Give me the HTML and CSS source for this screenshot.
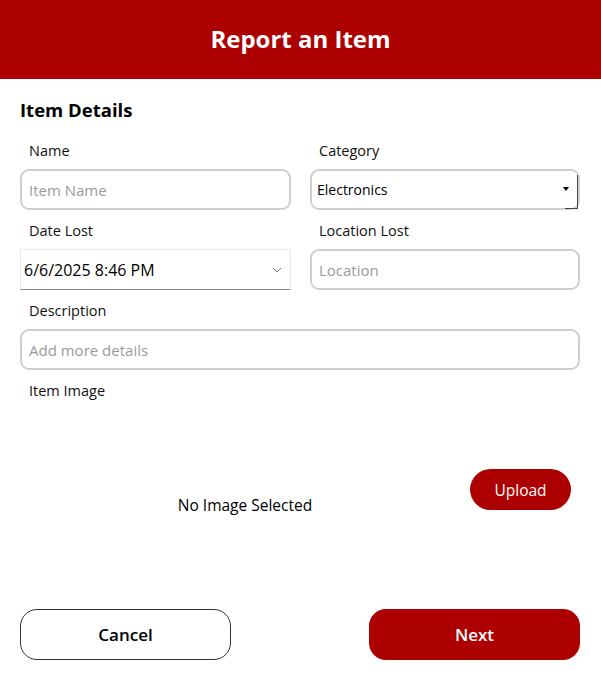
FILE: index.html
```html
<!DOCTYPE html>
<html lang="en">
<head>
<meta charset="utf-8">
<title>Report an Item</title>
<link rel="stylesheet" href="styles.css">
</head>
<body>
<header class="topbar">
  <h1 class="title">Report an Item</h1>
</header>
<main class="content">
  <h2 class="section-title">Item Details</h2>
  <div class="grid">
    <div class="field">
      <label class="label">Name</label>
      <div class="input placeholder">Item Name</div>
    </div>
    <div class="field">
      <label class="label">Category</label>
      <div class="input select">
        <span class="select-text">Electronics</span>
        <span class="select-arrow"></span>
      </div>
    </div>
    <div class="field">
      <label class="label">Date Lost</label>
      <div class="date">
        <span>6/6/2025 8:46 PM</span>
        <svg class="chev" width="10" height="6" viewBox="0 0 10 6"><path d="M1 1 L5 5 L9 1" fill="none" stroke="#777" stroke-width="1"/></svg>
      </div>
    </div>
    <div class="field">
      <label class="label">Location Lost</label>
      <div class="input placeholder">Location</div>
    </div>
    <div class="field wide">
      <label class="label">Description</label>
      <div class="input placeholder">Add more details</div>
    </div>
    <div class="field wide">
      <label class="label">Item Image</label>
    </div>
  </div>
  <div class="image-area">
    <div class="image-box">No Image Selected</div>
    <button class="upload">Upload</button>
  </div>
  <div class="actions">
    <button class="btn cancel">Cancel</button>
    <button class="btn next">Next</button>
  </div>
</main>
</body>
</html>
```
FILE: styles.css
```css
* { box-sizing: border-box; }
html, body { margin: 0; padding: 0; background: #fff; }
body {
  font-family: "Open Sans", "Noto Sans", sans-serif;
  color: #000;
  width: 601px;
  height: 679px;
  overflow: hidden;
}
.topbar {
  height: 79px;
  background: #ad0000;
  display: flex;
  align-items: center;
  justify-content: center;
}
.title {
  margin: 0 0 1px 0;
  color: #fff;
  font-size: 24px;
  font-weight: 700;
  line-height: 30px;
}
.content {
  padding: 0 21px 0 20px;
}
.section-title {
  margin: 19px 0 0 0;
  font-size: 18.5px;
  font-weight: 700;
  line-height: 24px;
  height: 24px;
}
.grid {
  margin-top: 19px;
  display: grid;
  grid-template-columns: 271px 270px;
  column-gap: 19px;
  row-gap: 11px;
}
.field { display: flex; flex-direction: column; gap: 8px; }
.field.wide { grid-column: 1 / 3; }
.label {
  padding-left: 9px;
  font-size: 14.5px;
  line-height: 20px;
  height: 20px;
  font-weight: 400;
  color: #111;
}
.input {
  height: 41px;
  border: 2px solid #cfcfcf;
  border-radius: 9px;
  padding: 0 7px;
  display: flex;
  align-items: center;
  font-size: 15px;
}
.placeholder { color: #9a9a9a; }
.select {
  position: relative;
  padding: 0 5px;
  color: #000;
  font-size: 14px;
}
.select-text { flex: 1; }
.select-arrow {
  width: 0; height: 0;
  border-left: 3.5px solid transparent;
  border-right: 3.5px solid transparent;
  border-top: 4px solid #000;
  margin-right: 4px;
  margin-top: -2px;
}
.select::after {
  content: "";
  position: absolute;
  right: 0px;
  top: 4px;
  bottom: -1px;
  width: 12px;
  border-right: 1.5px solid #444;
  border-bottom: 1.5px solid #444;
}
.date {
  height: 41px;
  border: 1px solid #e8e8e8;
  border-bottom: 1px solid #888;
  padding: 0 8px 0 3px;
  display: flex;
  align-items: center;
  justify-content: space-between;
  font-size: 16px;
}
.chev { margin-top: 1px; }
.image-area {
  margin-top: 9px;
  height: 190px;
  display: flex;
  align-items: flex-start;
}
.image-box {
  flex: 1;
  align-self: stretch;
  display: flex;
  align-items: center;
  justify-content: center;
  font-size: 15.5px;
}
.upload {
  margin-top: 59px;
  margin-right: 9px;
  width: 101px;
  height: 41px;
  border: none;
  border-radius: 21px;
  background: #ad0000;
  color: #fff;
  font-family: inherit;
  font-size: 15.5px;
  font-weight: 400;
}
.actions {
  margin-top: 9px;
  display: flex;
  justify-content: space-between;
}
.btn {
  width: 211px;
  height: 51px;
  border-radius: 17px;
  font-family: inherit;
  font-size: 17px;
  font-weight: 600;
}
.cancel {
  background: #fff;
  border: 1px solid #333;
  color: #000;
}
.next {
  background: #ad0000;
  border: none;
  color: #fff;
}
```
